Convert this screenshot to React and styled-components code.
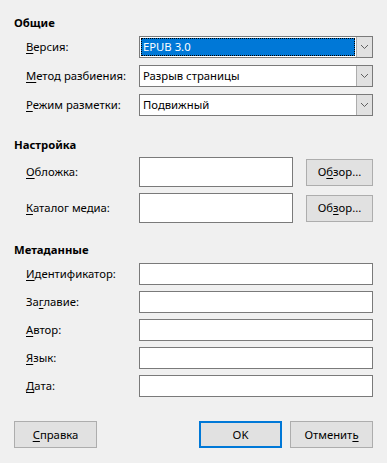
import React from "react";
import styled, { createGlobalStyle } from "styled-components";

const Global = createGlobalStyle`
  html, body {
    margin: 0;
    padding: 0;
    background: #f0f0f0;
  }
  body {
    font-family: "Noto Sans", "DejaVu Sans", sans-serif;
    font-size: 11.3px;
    color: #000;
  }
`;

// 다이얼로그 전체
const Dialog = styled.div`
  width: 387px;
  height: 463px;
  box-sizing: border-box;
  padding: 15px 14px 0 14px;
  background: #f0f0f0;
  display: flex;
  flex-direction: column;
`;

const Section = styled.div`
  display: flex;
  flex-direction: column;
  margin-top: ${(p) => p.$top || 0}px;
`;

const Heading = styled.div`
  font-weight: 700;
  line-height: 16px;
  height: 16px;
  margin-bottom: ${(p) => p.$gap || 5}px;
`;

const Rows = styled.div`
  display: flex;
  flex-direction: column;
  gap: ${(p) => p.$gap}px;
`;

const Row = styled.div`
  display: grid;
  grid-template-columns: 113px 1fr;
  align-items: center;
  padding-left: 12px;
  height: ${(p) => p.$h}px;
`;

const Label = styled.div`
  white-space: nowrap;
  line-height: 16px;
  & u {
    text-decoration-thickness: 1px;
    text-underline-offset: 2px;
  }
`;

/* 콤보박스 */
const Combo = styled.div`
  height: 22px;
  box-sizing: border-box;
  border: 1px solid #7a7a7a;
  background: #fff;
  display: flex;
  padding: 1px 0 1px 1px;
`;

const ComboValue = styled.div`
  flex: 1;
  box-sizing: border-box;
  display: flex;
  align-items: center;
  padding-left: 2px;
  line-height: 16px;
  white-space: nowrap;
  background: ${(p) => (p.$active ? "#0078d7" : "#fff")};
  color: ${(p) => (p.$active ? "#fff" : "#000")};
  outline: ${(p) => (p.$active ? "1px dotted #000" : "none")};
  outline-offset: -1px;
`;

const ComboButton = styled.div`
  width: 16px;
  margin-left: 1px;
  box-sizing: border-box;
  border-left: 1px solid #adadad;
  background: #e1e1e1;
  display: flex;
  align-items: center;
  justify-content: center;
  margin-top: -1px;
  margin-bottom: -1px;
`;

const Field = styled.div`
  display: flex;
  align-items: center;
  gap: 13px;
`;

const Edit = styled.div`
  height: ${(p) => p.$h || 22}px;
  box-sizing: border-box;
  border: 1px solid #7a7a7a;
  background: #fff;
  flex: 1;
`;

const Button = styled.div`
  width: ${(p) => p.$w || 83}px;
  height: 27px;
  box-sizing: border-box;
  border: ${(p) => (p.$default ? "2px solid #0078d7" : "1px solid #adadad")};
  background: #e1e1e1;
  display: flex;
  align-items: center;
  justify-content: center;
  line-height: 16px;
  white-space: nowrap;
  & u {
    text-decoration-thickness: 1px;
    text-underline-offset: 2px;
  }
`;

const Footer = styled.div`
  margin-top: 24px;
  display: flex;
  gap: 8px;
  & > :first-child {
    margin-right: auto;
  }
`;

const Chevron = () => (
  <svg width="9" height="6" viewBox="0 0 9 6">
    <polyline points="1,1 4.5,4.5 8,1" fill="none" stroke="#606060" strokeWidth="1" />
  </svg>
);

const ComboBox = ({ value, active }) => (
  <Combo>
    <ComboValue $active={active}>{value}</ComboValue>
    <ComboButton>
      <Chevron />
    </ComboButton>
  </Combo>
);

const App = () => {
  return (
    <>
      <Global />
      <Dialog>
        <Section>
          <Heading>Общие</Heading>
          <Rows $gap={7}>
            <Row $h={22}>
              <Label><u>В</u>ерсия:</Label>
              <ComboBox value="EPUB 3.0" active />
            </Row>
            <Row $h={22}>
              <Label><u>М</u>етод разбиения:</Label>
              <ComboBox value="Разрыв страницы" />
            </Row>
            <Row $h={22}>
              <Label><u>Р</u>ежим разметки:</Label>
              <ComboBox value="Подвижный" />
            </Row>
          </Rows>
        </Section>

        <Section $top={21}>
          <Heading $gap={4}>Настройка</Heading>
          <Rows $gap={6}>
            <Row $h={30}>
              <Label><u>О</u>бложка:</Label>
              <Field>
                <Edit $h={30} />
                <Button $w={67}>О<u>б</u>зор...</Button>
              </Field>
            </Row>
            <Row $h={30}>
              <Label><u>К</u>аталог медиа:</Label>
              <Field>
                <Edit $h={30} />
                <Button $w={67}>Об<u>з</u>ор...</Button>
              </Field>
            </Row>
          </Rows>
        </Section>

        <Section $top={19}>
          <Heading>Метаданные</Heading>
          <Rows $gap={6}>
            <Row $h={22}>
              <Label><u>И</u>дентификатор:</Label>
              <Edit />
            </Row>
            <Row $h={22}>
              <Label>За<u>г</u>лавие:</Label>
              <Edit />
            </Row>
            <Row $h={22}>
              <Label><u>А</u>втор:</Label>
              <Edit />
            </Row>
            <Row $h={22}>
              <Label><u>Я</u>зык:</Label>
              <Edit />
            </Row>
            <Row $h={22}>
              <Label><u>Д</u>ата:</Label>
              <Edit />
            </Row>
          </Rows>
        </Section>

        <Footer>
          <Button><u>С</u>правка</Button>
          <Button $default>OK</Button>
          <Button>Отменит<u>ь</u></Button>
        </Footer>
      </Dialog>
    </>
  );
};

export default App;
